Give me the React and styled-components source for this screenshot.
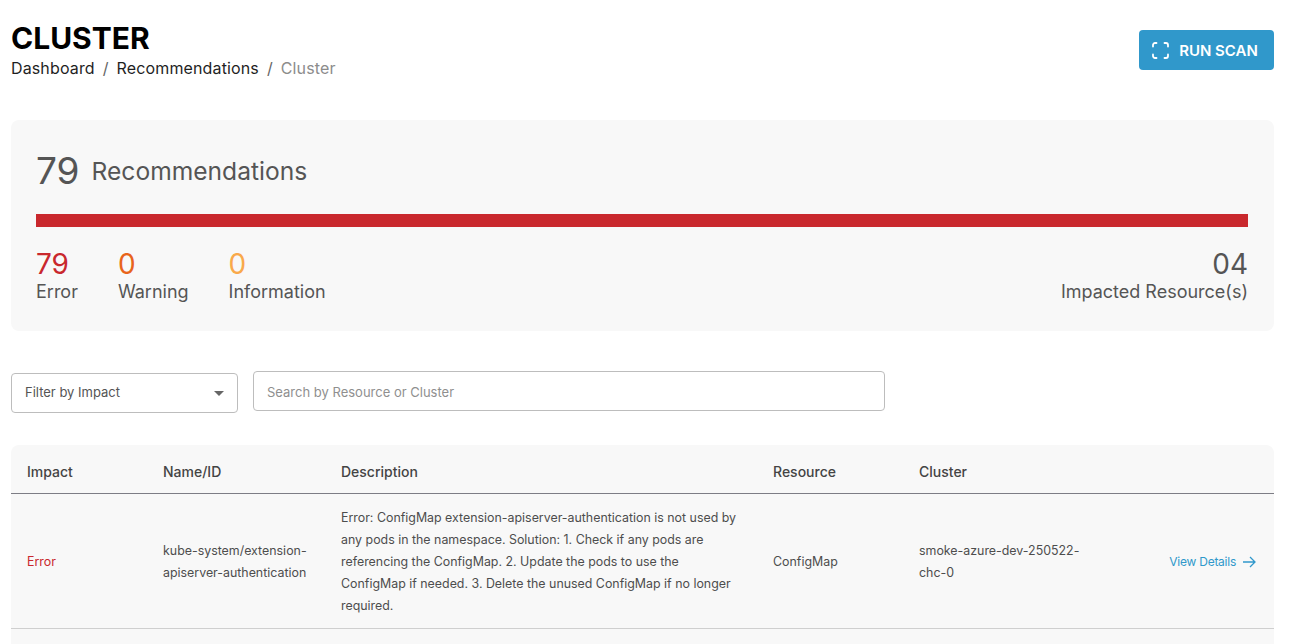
import React from "react";
import styled, { createGlobalStyle } from "styled-components";

const Global = createGlobalStyle`
  html, body { margin: 0; padding: 0; background: #fff; height: 644px; overflow: hidden; }
  body { font-family: Inter, "Liberation Sans", sans-serif; color: #555; }
`;
const Page = styled.div`
  padding: 20px 22px 0 11px;
`;
const Header = styled.header`
  display: flex;
  justify-content: space-between;
  align-items: flex-start;
  height: 100px;
`;
const Title = styled.h1`
  margin: 0;
  font-size: 30px;
  line-height: 36px;
  font-weight: 700;
  color: #000;
`;
const Crumbs = styled.nav`
  display: flex;
  font-size: 16px;
  line-height: 24px;
  letter-spacing: 0.13px;
  color: #1f1f1f;
`;
const Sep = styled.span`
  margin: 0 8px;
  color: #666;
`;
const Current = styled.span`
  color: #8c8c8c;
`;
const ScanButton = styled.button`
  margin-top: 10px;
  width: 135px;
  height: 40px;
  display: flex;
  align-items: center;
  justify-content: center;
  gap: 10px;
  border: 0;
  padding: 0 3px 0 0;
  border-radius: 4px;
  background: #3098cb;
  color: #fff;
  font: 600 15px Inter, sans-serif;
`;
const Summary = styled.section`
  background: #f8f8f8;
  border-radius: 8px;
  height: 211px;
  box-sizing: border-box;
  padding: 29px 26px 0 25px;
`;
const Heading = styled.div`
  display: flex;
  align-items: center;
  gap: 12px;
  height: 44px;
`;
const Total = styled.span`
  font-size: 37px;
  line-height: 44px;
  color: #555;
`;
const HeadingLabel = styled.span`
  font-size: 24.6px;
  line-height: 44px;
  color: #555;
`;
const Bar = styled.div`
  height: 13px;
  margin-top: 21px;
  background: #c9282d;
`;
const Stats = styled.div`
  display: flex;
  gap: 40px;
  margin-top: 22px;
`;
const Stat = styled.div`
  display: flex;
  flex-direction: column;
  align-items: ${(p) => (p.$end ? "flex-end" : "flex-start")};
  margin-left: ${(p) => (p.$end ? "auto" : "0")};
`;
const StatValue = styled.span`
  font-size: 28px;
  line-height: 30px;
  color: ${(p) => p.$color};
`;
const StatLabel = styled.span`
  font-size: 18px;
  line-height: 26px;
  color: #555;
`;
const Filters = styled.div`
  display: flex;
  align-items: flex-start;
  gap: 15px;
  margin-top: 40px;
`;
const Select = styled.div`
  width: 227px;
  height: 40px;
  margin-top: 2px;
  box-sizing: border-box;
  border: 1px solid #bdbdbd;
  border-radius: 4px;
  padding: 0 13px 2px;
  display: flex;
  align-items: center;
  justify-content: space-between;
  font-size: 13px;
  color: #555;
`;
const Caret = styled.span`
  width: 0;
  height: 0;
  border-left: 5px solid transparent;
  border-right: 5px solid transparent;
  border-top: 5px solid #666;
  margin-top: 2px;
`;
const Search = styled.div`
  width: 632px;
  height: 40px;
  box-sizing: border-box;
  border: 1px solid #bdbdbd;
  border-radius: 4px;
  padding: 1px 13px 0;
  display: flex;
  align-items: center;
  font-size: 13px;
  color: #8f8f8f;
`;
const Table = styled.div`
  margin-top: 32px;
  background: #f8f8f8;
  border-radius: 8px 8px 0 0;
`;
const columns = "136px 178px 432px 146px 1fr";
const HeadRow = styled.div`
  display: grid;
  grid-template-columns: ${columns};
  height: 49px;
  box-sizing: border-box;
  padding-top: 5px;
  align-items: center;
  border-bottom: 1px solid #7d7d85;
  font-size: 14px;
  font-weight: 500;
  color: #444;
`;
const Row = styled.div`
  display: grid;
  grid-template-columns: ${columns};
  align-items: center;
  height: 135px;
  box-sizing: border-box;
  padding-top: 2px;
  border-bottom: 1px solid #cfcfcf;
  font-size: 12.4px;
  line-height: 22px;
  color: #4d4d4d;
`;
const Cell = styled.div`
  padding: 0 16px;
  min-width: 0;
`;
const DescCell = styled(Cell)`
  padding-right: 20px;
`;
const ImpactCell = styled(Cell)`
  color: #c9282d;
`;
const ClusterCell = styled(Cell)`
  display: flex;
  align-items: center;
  justify-content: space-between;
  padding-right: 18px;
`;
const ClusterName = styled.span`
  width: 180px;
`;
const Details = styled.a`
  display: flex;
  align-items: center;
  gap: 7px;
  font-size: 12px;
  letter-spacing: -0.25px;
  color: #3098cb;
  white-space: nowrap;
`;
const Spacer = styled.div`
  height: 60px;
  background: #f8f8f8;
`;

export default function App() {
  return (
    <Page>
      <Global />
      <Header>
        <div>
          <Title>CLUSTER</Title>
          <Crumbs>
            <span>Dashboard</span><Sep>/</Sep><span>Recommendations</span><Sep>/</Sep><Current>Cluster</Current>
          </Crumbs>
        </div>
        <ScanButton>
          <svg width="17" height="17" viewBox="0 0 17 17" fill="none" stroke="#fff" strokeWidth="1.8" strokeLinecap="round">
            <path d="M1 4.5V3a2 2 0 0 1 2-2h1.5M12.5 1H14a2 2 0 0 1 2 2v1.5M16 12.500V14a2 2 0 0 1-2 2h-1.500M4.500 16H3a2 2 0 0 1-2-2v-1.500" />
          </svg>
          RUN SCAN
        </ScanButton>
      </Header>
      <Summary>
        <Heading>
          <Total>79</Total>
          <HeadingLabel>Recommendations</HeadingLabel>
        </Heading>
        <Bar />
        <Stats>
          <Stat><StatValue $color="#c9282d">79</StatValue><StatLabel>Error</StatLabel></Stat>
          <Stat><StatValue $color="#e8641b">0</StatValue><StatLabel>Warning</StatLabel></Stat>
          <Stat><StatValue $color="#f9a94b">0</StatValue><StatLabel>Information</StatLabel></Stat>
          <Stat $end><StatValue $color="#555">04</StatValue><StatLabel>Impacted Resource(s)</StatLabel></Stat>
        </Stats>
      </Summary>
      <Filters>
        <Select>Filter by Impact<Caret /></Select>
        <Search>Search by Resource or Cluster</Search>
      </Filters>
      <Table>
        <HeadRow>
          <Cell>Impact</Cell>
          <Cell>Name/ID</Cell>
          <Cell>Description</Cell>
          <Cell>Resource</Cell>
          <Cell>Cluster</Cell>
        </HeadRow>
        <Row>
          <ImpactCell>Error</ImpactCell>
          <Cell>kube-system/extension-apiserver-authentication</Cell>
          <DescCell>Error: ConfigMap extension-apiserver-authentication is not used by any pods in the namespace. Solution: 1. Check if any pods are referencing the ConfigMap. 2. Update the pods to use the ConfigMap if needed. 3. Delete the unused ConfigMap if no longer required.</DescCell>
          <Cell>ConfigMap</Cell>
          <ClusterCell>
            <ClusterName>smoke-azure-dev-250522-chc-0</ClusterName>
            <Details>
              View Details
              <svg width="13" height="12" viewBox="0 0 13 12" fill="none" stroke="#3098cb" strokeWidth="1.3"><path d="M0 6h12M7 1l5 5-5 5" /></svg>
            </Details>
          </ClusterCell>
        </Row>
        <Spacer />
      </Table>
    </Page>
  );
}
